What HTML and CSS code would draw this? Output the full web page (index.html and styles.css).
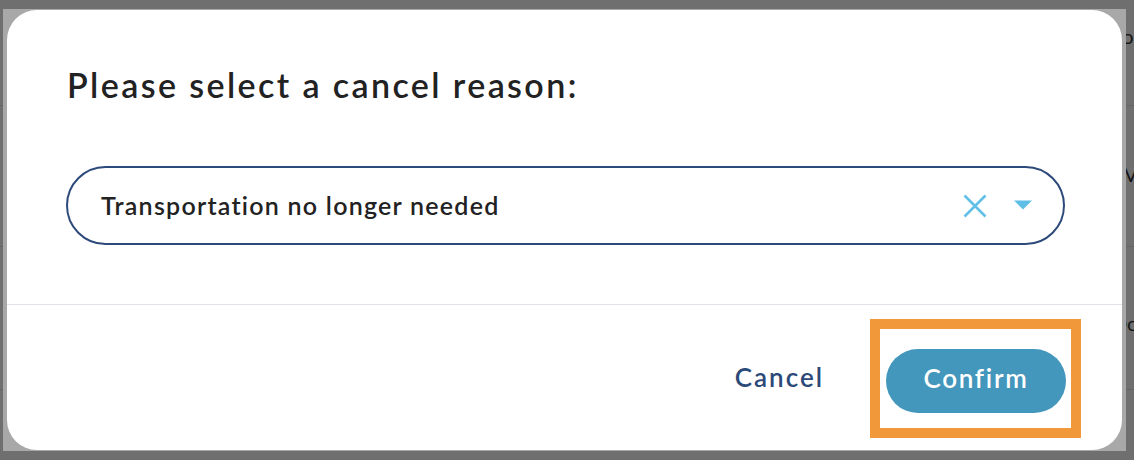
FILE: index.html
```html
<!DOCTYPE html>
<html lang="en">
<head>
<meta charset="utf-8">
<title>Cancel reason</title>
<link rel="stylesheet" href="styles.css">
</head>
<body>
<div class="page">
  <div class="row row-1"><span class="cell">You</span></div>
  <div class="row row-2"><span class="cell">VW</span></div>
  <div class="row row-3"><span class="cell">Do</span></div>
  <div class="row row-4"></div>
</div>
<div class="overlay">
  <div class="frame">
    <div class="modal" role="dialog" aria-labelledby="modal-title">
      <div class="modal-body">
        <h2 class="title" id="modal-title">Please select a cancel reason:</h2>
        <div class="select">
          <span class="select-value">Transportation no longer needed</span>
          <span class="select-clear" aria-label="Clear">
            <svg width="24" height="24" viewBox="0 0 24 24"><path d="M1.5 1.5 L22.5 22.5 M22.5 1.5 L1.5 22.5" stroke="#62c0e6" stroke-width="2.6" fill="none"/></svg>
          </span>
          <span class="select-arrow" aria-hidden="true">
            <svg width="18" height="10" viewBox="0 0 18 10"><path d="M0 0.5 H18 L9 9.5 Z" fill="#5fbee6"/></svg>
          </span>
        </div>
      </div>
      <div class="modal-footer">
        <button class="btn-cancel" type="button">Cancel</button>
        <div class="highlight">
          <button class="btn-confirm" type="button">Confirm</button>
        </div>
      </div>
    </div>
  </div>
</div>
</body>
</html>
```

FILE: styles.css
```css
html, body {
  margin: 0;
  padding: 0;
}
body {
  width: 1134px;
  height: 460px;
  overflow: hidden;
  background: #6f6f6f;
  font-family: "Lato", "Open Sans", sans-serif;
  position: relative;
}

/* Underlying page (dimmed) */
.page {
  display: flex;
  flex-direction: column;
}
.row {
  border-bottom: 1px solid #636363;
  display: flex;
  align-items: flex-start;
  padding-left: 1104px;
  font-size: 20px;
  color: #151515;
  white-space: nowrap;
}
.row-1 { height: 105px; }
.row-1 .cell { padding-top: 24px; padding-left: 8px; }
.row-2 { height: 140px; }
.row-2 .cell { padding-top: 56px; padding-left: 20px; }
.row-3 { height: 142px; }
.row-3 .cell { padding-top: 64px; padding-left: 8px; }
.row-4 { height: 80px; border-bottom: none; }

/* Overlay with modal */
.overlay {
  position: absolute;
  inset: 0;
  padding: 9px 8px 9px 3px;
  box-sizing: border-box;
}
.frame {
  background: #a8a8a8;
  height: 442px;
  padding: 1px 4px 1px 4px;
  box-sizing: border-box;
}
.modal {
  background: #ffffff;
  border-radius: 30px;
  height: 440px;
  display: flex;
  flex-direction: column;
  overflow: hidden;
}
.modal-body {
  height: 295px;
  padding: 55px 57px 0 59px;
  box-sizing: border-box;
  border-bottom: 1.5px solid #e1e3e8;
}
.title {
  margin: 0 0 0 1px;
  font-size: 34px;
  line-height: 40px;
  font-weight: 600;
  color: #222222;
  letter-spacing: 2.4px;
}
.select {
  margin-top: 61px;
  height: 79px;
  box-sizing: border-box;
  border: 2px solid #2d4a7b;
  border-radius: 40px;
  display: flex;
  align-items: center;
  padding: 0 31px 0 33px;
}
.select-value {
  flex: 1;
  font-size: 25px;
  font-weight: 600;
  color: #222222;
  letter-spacing: 1.25px;
  padding-bottom: 2px;
}
.select-clear {
  display: flex;
  width: 24px;
  height: 24px;
  margin-right: 27px;
}
.select-arrow {
  display: flex;
  width: 18px;
  height: 10px;
  margin-top: -2px;
}
.modal-footer {
  flex: 1;
  display: flex;
  justify-content: flex-end;
  align-items: center;
  padding-right: 41px;
  padding-top: 1px;
}
.btn-cancel {
  background: none;
  border: none;
  padding: 0 0 3px 0;
  margin-right: 46px;
  font-family: inherit;
  font-size: 26px;
  font-weight: 600;
  color: #2c4a78;
  letter-spacing: 2px;
  cursor: pointer;
}
.highlight {
  border: 10px solid #f0983a;
  padding: 20px 5px 15px 6px;
}
.btn-confirm {
  display: block;
  width: 180px;
  height: 64px;
  border: none;
  border-radius: 32px;
  background: #4396bc;
  color: #ffffff;
  font-family: inherit;
  font-size: 26px;
  font-weight: 600;
  letter-spacing: 1.7px;
  padding: 0 0 5px 0;
  cursor: pointer;
}
```
